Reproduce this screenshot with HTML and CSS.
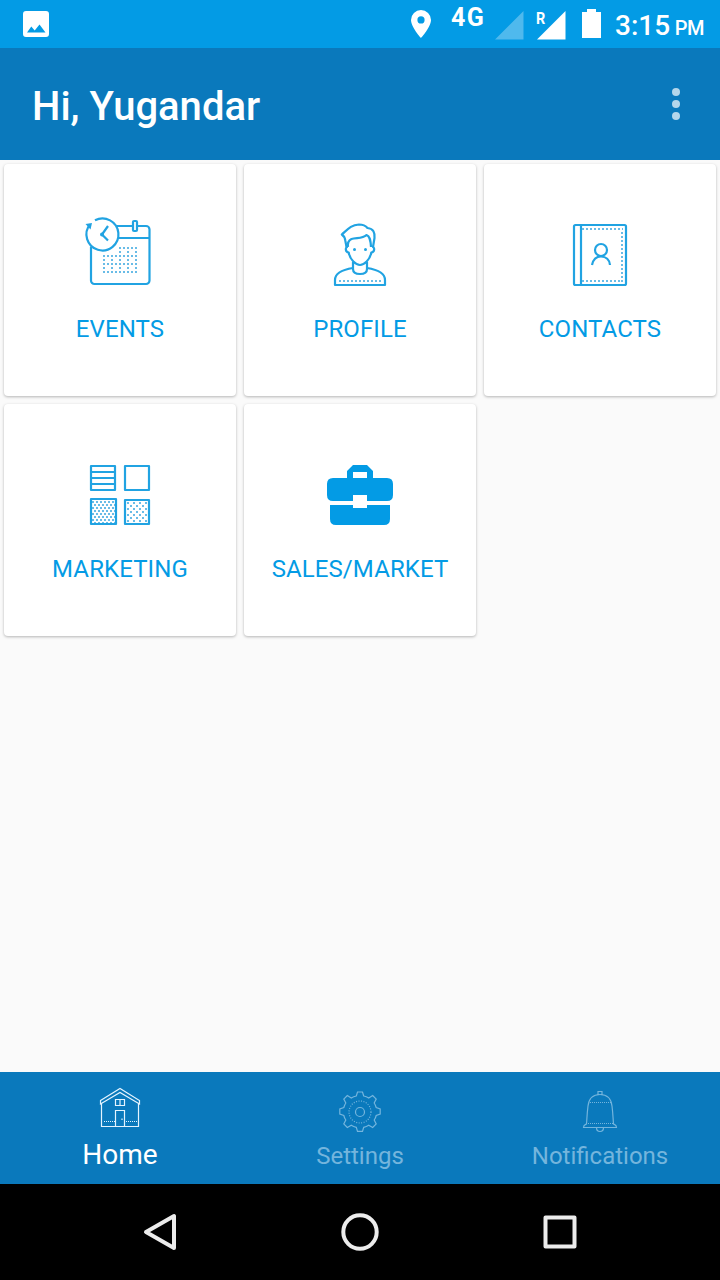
FILE: index.html
```html
<!DOCTYPE html>
<html lang="en">

<head>
    <meta charset="UTF-8">
    <meta name="viewport" content="width=device-width, initial-scale=1.0">
    <title>Home</title>
    <link rel="stylesheet" href="styles.css">
</head>

<body>

    <div class="status-bar">
        <svg class="status-photo" width="26" height="26" viewBox="0 0 26 26">
            <path fill="#fff" fill-rule="evenodd" d="M3 0h20a3 3 0 0 1 3 3v20a3 3 0 0 1-3 3H3a3 3 0 0 1-3-3V3a3 3 0 0 1 3-3zM4 21.5h18.5L16.5 13.5l-4.8 6L8.3 15.500z"/>
        </svg>
        <svg class="status-pin" width="20" height="28" viewBox="0 0 20 28">
            <path fill="#fff" fill-rule="evenodd" d="M10 0a10 10 0 0 1 10 10c0 7-10 18-10 18S0 17 0 10A10 10 0 0 1 10 0zm0 6.300a3.600 3.600 0 1 0 0 7.200 3.600 3.600 0 0 0 0-7.200z"/>
        </svg>
        <span class="network">4G</span>
        <svg class="signal-off" width="29" height="29" viewBox="0 0 29 29">
            <path fill="#fff" fill-opacity=".3" d="M0 28.500L28.500 0v28.500z"/>
        </svg>
        <div class="roaming">
            <span class="roaming-letter">R</span>
            <svg width="29" height="29" viewBox="0 0 29 29">
                <path fill="#fff" d="M0 28.500L28.500 0v28.500z"/>
            </svg>
        </div>
        <svg class="battery" width="19" height="29" viewBox="0 0 19 29">
            <path fill="#fff" d="M5 0h9v3h5v26H0V3h5z"/>
        </svg>
        <span class="clock">3:15</span>
        <span class="clock-pm">PM</span>
    </div>

    <header class="header">
        <h1>Hi, Yugandar</h1>
        <div class="menu">
            <span></span>
            <span></span>
            <span></span>
        </div>
    </header>

    <main class="cards">
        <div class="card">
            <svg class="card-icon" viewBox="0 0 100 100">
                <path d="M46.500 26H62M68 26h8a3.500 3.500 0 0 1 3.500 3.500v51A3.500 3.500 0 0 1 76 84H24.500a3.500 3.500 0 0 1-3.500-3.500V47M48.500 38h31"/>
                <rect x="63" y="21" width="4" height="10" rx="1"/>
                <path d="M25 20.300a16 16 0 1 1-5 4.100"/>
                <path class="solid" d="M15.500 24l6.500-1-1.500 6.500z"/>
                <path d="M38 26l-6 8.500 6 6"/>
                <circle class="solid" cx="32" cy="34.500" r="2"/>
                <g class="dots" stroke-dasharray="2 2">
                    <path d="M49 48h19M49 52h2m6 0h2m6 0h2M33 56h35M33 60h2m6 0h2m6 0h2m6 0h2m6 0h2M33 64h35M33 68h2m6 0h2m6 0h2m6 0h2m6 0h2M33 72h35"/>
                </g>
            </svg>
            <p>EVENTS</p>
        </div>
        <div class="card">
            <svg class="card-icon" viewBox="0 0 100 100">
                <path d="M36.500 47l-1.200-6.500q-.5-4-3.500-6C38 29 41 25 49 24.500c5 0 6.500 1 8.500 3.500 6 .5 7.500 5 7 10l-1.500 9"/>
                <path d="M38 47c-.5-3.500.5-6.500 3.500-8 5-1.500 11 0 15-4 3 1 4 4 4.500 12"/>
                <path d="M38 47c-3-.5-3 5 .7 5.500C40 60 46 65 50 65s10-5 11.300-12.500C65 52 65 46.500 62 47"/>
                <path d="M43 62v7q0 5 7 5t7-5v-7"/>
                <path d="M43 68c-13 2-18 7-18 12v5h50v-5c0-5-5-10-18-12"/>
                <path class="dots" stroke-dasharray="2 2" d="M29 81h43"/>
                <circle class="solid" cx="44.500" cy="49.500" r="1.500"/>
                <circle class="solid" cx="55.500" cy="49.500" r="1.500"/>
            </svg>
            <p>PROFILE</p>
        </div>
        <div class="card">
            <svg class="card-icon" viewBox="0 0 100 100">
                <rect x="24" y="25" width="52" height="60" rx="1.500"/>
                <path d="M31 25v60"/>
                <path class="dots" stroke-dasharray="2 2" d="M32 29h41M72 32v50M32 81h41"/>
                <circle cx="51" cy="50" r="6"/>
                <path d="M42 65c1-5 4-8.500 9-8.500s8.500 3.500 9 8.500"/>
            </svg>
            <p>CONTACTS</p>
        </div>
        <div class="card">
            <svg class="card-icon" viewBox="0 -5 100 100">
                <defs>
                    <pattern id="fine" x="22" y="56" width="4" height="6" patternUnits="userSpaceOnUse">
                        <path class="pattern-dot" d="M0 0h2v2H0zM2 3h2v2H2z"/>
                    </pattern>
                    <pattern id="coarse" x="57" y="57" width="6" height="6" patternUnits="userSpaceOnUse">
                        <path class="pattern-dot" d="M0 0h2v2H0zM3 3h2v2H3z"/>
                    </pattern>
                </defs>
                <path d="M21 21h24v24H21zM21 27h24M21 33h24M21 39h24M55 21h24v24H55z"/>
                <rect x="21" y="54" width="25" height="25" fill="url(#fine)"/>
                <rect x="55" y="55" width="24" height="24" fill="url(#coarse)"/>
            </svg>
            <p>MARKETING</p>
        </div>
        <div class="card">
            <svg class="card-icon" viewBox="0 -5 100 100">
                <path class="case" d="M37 33v-7l6-6h14l6 6v7h14q6 0 6 6v11q0 6-6 6H57v-6H43v6H23q-6 0-6-6V39q0-6 6-6zM43 27v6h14v-6zM20 60h23v3h14v-3h23v14q0 6-6 6H26q-6 0-6-6z"/>
            </svg>
            <p>SALES/MARKET</p>
        </div>
    </main>

    <nav class="tabs">
        <div class="tab active">
            <svg width="60" height="45" viewBox="20 5 60 45">
                <path d="M30.500 25.500L50 13.500l19.500 12v3.500L50 17.500 30.500 29zM31.500 28.500v23h37v-23M45.500 51V35.500h9V51M45.500 24.500h9v6h-9zM50 24.500v6M52 43.500v1.500"/>
                <path stroke-dasharray="1 1" d="M34 46.500h11M56 46.500h11"/>
            </svg>
            <span>Home</span>
        </div>
        <div class="tab">
            <svg width="60" height="45" viewBox="20 5 60 45">
                <path d="M47.500 17h5l1.200 4q2.700.5 5 2l4-2.500 3.500 3.500-2 4q1.400 2.200 2 4.500l4 1.500v5l-4 1.500q-.6 2.500-2 4.500l2 4-3.500 3.500-4-2.300q-2.300 1.500-5 2.100l-1.200 4h-5l-1.200-4q-2.700-.6-5-2.100l-4 2.300-3.500-3.500 2-4q-1.400-2-2-4.500l-4-1.500v-5l4-1.500q.6-2.300 2-4.500l-2-4 3.500-3.500 4 2.500q2.300-1.500 5-2z"/>
                <circle cx="50" cy="37" r="4.500"/>
                <circle cx="50" cy="37" r="11" stroke-dasharray="1 1.500"/>
            </svg>
            <span>Settings</span>
        </div>
        <div class="tab">
            <svg width="60" height="45" viewBox="20 5 60 45">
                <path d="M48 19.500v-3h4v3M36.500 49c-2 1-3 1-3 3.500h33c0-2.500-1-2.500-3-3.500-.5-6-.5-10-1.500-18-.8-7-5-11.500-12-11.500S38.800 24 38 31c-1 8-1 12-1.500 18zM46.500 52.500q0 4 3.500 4t3.500-4"/>
                <path stroke-dasharray="1 1" d="M40 27.500h21M38 48.500h25"/>
            </svg>
            <span>Notifications</span>
        </div>
    </nav>

    <div class="nav-bar">
        <svg width="40" height="40" viewBox="0 0 40 40">
            <path d="M6 20L34 4v32z"/>
        </svg>
        <svg width="40" height="40" viewBox="0 0 40 40">
            <circle cx="20" cy="20" r="16.700"/>
        </svg>
        <svg width="40" height="40" viewBox="0 0 40 40">
            <rect x="5.500" y="5.500" width="29" height="29"/>
        </svg>
    </div>

</body>

</html>
```
FILE: styles.css
```css
* {
    box-sizing: border-box;
}

body {
    font-family: Roboto, sans-serif;
    margin: 0;
    padding: 0;
    height: 1280px;
    background: #fafafa;
    display: flex;
    flex-direction: column;
    overflow: hidden;
}

svg {
    display: block;
    flex-shrink: 0;
}

/* Status bar */
.status-bar {
    height: 48px;
    background: #039be5;
    color: #fff;
    display: flex;
    align-items: flex-start;
    padding: 0 16px 0 23px;
    font-weight: 500;
}

.status-photo {
    margin-top: 11px;
}

.status-pin {
    margin: 10px 0 0 362px;
}

.network {
    width: 34px;
    margin: 4px 0 0 20px;
    font-size: 25px;
    line-height: 28px;
    font-weight: 700;
    letter-spacing: 1.5px;
}

.signal-off {
    margin: 11px 0 0 10px;
}

.roaming {
    position: relative;
    margin: 11px 0 0 13px;
}

.roaming-letter {
    position: absolute;
    top: -1px;
    left: -1px;
    font-size: 17px;
    line-height: 17px;
    font-weight: 700;
    transform: scaleX(0.85);
    transform-origin: left;
}

.battery {
    margin: 9px 0 0 16px;
}

.clock {
    width: 60px;
    margin: 10px 0 0 14px;
    font-size: 28px;
    line-height: 32px;
}

.clock-pm {
    margin: 16px 0 0;
    font-size: 20px;
    line-height: 24px;
    letter-spacing: -0.5px;
}

/* Title bar */
.header {
    height: 112px;
    background: #0a79bc;
    display: flex;
    align-items: center;
    justify-content: space-between;
    padding: 0 40px 0 32px;
}

.header h1 {
    margin: 6px 0 0;
    color: #fff;
    font-size: 40px;
    line-height: 48px;
    font-weight: 500;
}

.menu {
    display: flex;
    flex-direction: column;
    gap: 4px;
}

.menu span {
    width: 8px;
    height: 8px;
    border-radius: 50%;
    background: #b4d6eb;
}

/* Cards */
.cards {
    flex: 1;
    display: grid;
    grid-template-columns: repeat(3, 232px);
    grid-auto-rows: 232px;
    gap: 8px;
    padding: 4px;
}

.card {
    background: #fff;
    border-radius: 4px;
    box-shadow: 0 1px 3px rgba(0, 0, 0, 0.28);
    padding-top: 36px;
    text-align: center;
}

.card p {
    margin: 15px 0 0;
    color: #039be5;
    font-size: 24px;
    line-height: 28px;
    letter-spacing: 0.1px;
}

.card-icon {
    width: 100px;
    height: 100px;
    margin: 0 auto;
    fill: none;
    stroke: #21a3e2;
    stroke-width: 2.2;
    stroke-linejoin: round;
}

.card-icon .dots {
    stroke: #69bce7;
    stroke-width: 2;
}

.card-icon .solid {
    fill: #21a3e2;
    stroke: none;
}

.card-icon .pattern-dot {
    fill: #69bce7;
    stroke: none;
}

.card-icon .case {
    fill: #039be5;
    fill-rule: evenodd;
    stroke: none;
}

/* Bottom tabs */
.tabs {
    height: 112px;
    background: #0a79bc;
    display: flex;
}

.tab {
    flex: 1;
    display: flex;
    flex-direction: column;
    align-items: center;
    padding-top: 8px;
    color: #74b5dd;
    font-size: 24px;
}

.tab svg {
    fill: none;
    stroke: #74b5dd;
    stroke-width: 1.2;
    overflow: visible;
}

.tab span {
    margin-top: 15px;
    line-height: 32px;
}

.tab.active {
    color: #fff;
    font-size: 28px;
}

.tab.active svg {
    stroke: #e4f4ff;
}

.tab.active span {
    margin-top: 14px;
}

/* System buttons */
.nav-bar {
    height: 96px;
    background: #000;
    display: flex;
    align-items: center;
    justify-content: space-between;
    padding: 0 140px;
}

.nav-bar svg {
    fill: none;
    stroke: #ececec;
    stroke-width: 4;
    stroke-linejoin: round;
}
```
